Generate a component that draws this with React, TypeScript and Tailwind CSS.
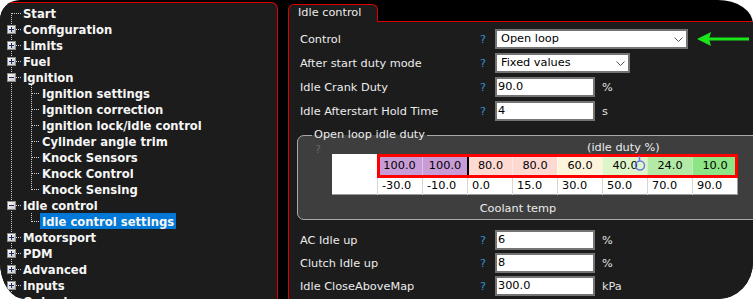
import React from 'react';

type TreeNode = {
  label: string;
  level: 0 | 1;
  box?: 'plus' | 'minus';
  first?: boolean;
  last?: boolean;
  selected?: boolean;
};

const tree: TreeNode[] = [
  { label: 'Start', level: 0, first: true },
  { label: 'Configuration', level: 0, box: 'plus' },
  { label: 'Limits', level: 0, box: 'plus' },
  { label: 'Fuel', level: 0, box: 'plus' },
  { label: 'Ignition', level: 0, box: 'minus' },
  { label: 'Ignition settings', level: 1 },
  { label: 'Ignition correction', level: 1 },
  { label: 'Ignition lock/idle control', level: 1 },
  { label: 'Cylinder angle trim', level: 1 },
  { label: 'Knock Sensors', level: 1 },
  { label: 'Knock Control', level: 1 },
  { label: 'Knock Sensing', level: 1, last: true },
  { label: 'Idle control', level: 0, box: 'minus' },
  { label: 'Idle control settings', level: 1, last: true, selected: true },
  { label: 'Motorsport', level: 0, box: 'plus' },
  { label: 'PDM', level: 0, box: 'plus' },
  { label: 'Advanced', level: 0, box: 'plus' },
  { label: 'Inputs', level: 0, box: 'plus' },
  { label: 'Outputs', level: 0, box: 'plus' },
];

const duty = [
  { v: '100.0', bg: 'bg-[#c89cd6]' },
  { v: '100.0', bg: 'bg-[#c89cd6]' },
  { v: '80.0', bg: 'bg-[#fdd9d2]' },
  { v: '80.0', bg: 'bg-[#fdd9d2]' },
  { v: '60.0', bg: 'bg-[#fef3db]' },
  { v: '40.0', bg: 'bg-[#def5c9]' },
  { v: '24.0', bg: 'bg-[#b2eaa6]' },
  { v: '10.0', bg: 'bg-[#8ee585]' },
];

const temps = ['-30.0', '-10.0', '0.0', '15.0', '30.0', '50.0', '70.0', '90.0'];

const dots = { stroke: '#cfcfcf', strokeWidth: 1, strokeDasharray: '1 1' };

// Lignes pointillées + boîte +/- d'une ligne de l'arbre
function TreeLines({ node }: { node: TreeNode }) {
  const w = node.level === 0 ? 21 : 40;
  return (
    <svg width={w} height={16} className="shrink-0">
      <line x1={11.5} y1={node.first ? 8 : 0} x2={11.5} y2={16} {...dots} />
      {node.level === 0 ? (
        <line x1={12} y1={8.5} x2={21} y2={8.5} {...dots} />
      ) : (
        <>
          <line x1={31.5} y1={0} x2={31.5} y2={node.last ? 9 : 16} {...dots} />
          <line x1={32} y1={8.5} x2={40} y2={8.5} {...dots} />
        </>
      )}
      {node.box && (
        <>
          <defs>
            <linearGradient id="boxfill" x1="0" y1="0" x2="1" y2="1">
              <stop offset="0" stopColor="#ffffff" />
              <stop offset="1" stopColor="#c4c4c4" />
            </linearGradient>
          </defs>
          <rect x={7.5} y={4.5} width={8} height={8} fill="url(#boxfill)" stroke="#8e8e8e" />
          <line x1={9} y1={8.5} x2={14} y2={8.5} stroke="#1c2e6e" />
          {node.box === 'plus' && <line x1={11.5} y1={6} x2={11.5} y2={11} stroke="#1c2e6e" />}
        </>
      )}
    </svg>
  );
}

function Chevron() {
  return (
    <svg width={9} height={5} className="shrink-0">
      <path d="M0.5 0.5 L4.5 4.5 L8.5 0.5" fill="none" stroke="#555" strokeWidth={1} />
    </svg>
  );
}

function Help({ dim }: { dim?: boolean }) {
  return <span className={dim ? 'text-[#666]' : 'text-[#2e92da]'}>?</span>;
}

function Row({ label, children }: { label: string; children: React.ReactNode }) {
  return (
    <div className="flex h-[20px] items-center">
      <div className="w-[180px] shrink-0 pt-[2px]">{label}</div>
      <div className="w-[15px] shrink-0 pt-[2px]">
        <Help />
      </div>
      {children}
    </div>
  );
}

function Input({ value, unit }: { value: string; unit: string }) {
  return (
    <>
      <div className="flex h-full w-[100px] items-center border-2 border-[#747474] bg-white pl-[1px] text-black">
        {value}
      </div>
      <span className="ml-[7px] pt-[2px] text-[#e0e0e0]">{unit}</span>
    </>
  );
}

function Select({ value, w }: { value: string; w: string }) {
  return (
    <div className={`flex h-full items-center justify-between border-2 border-[#747474] bg-white pl-[4px] pr-[3px] text-black ${w}`}>
      <span>{value}</span>
      <Chevron />
    </div>
  );
}

export default function App() {
  return (
    <div className="flex h-[299px] w-[753px] overflow-hidden rounded-tl-[20px] rounded-tr-[35px_24px] rounded-br-[35px_37px] rounded-bl-[25px_37px] bg-black font-['DejaVu_Sans',sans-serif]">
      {/* arbre de navigation */}
      <div className="mt-[2px] w-[278px] shrink-0 overflow-hidden rounded-tr-[7px] border-t border-r border-[#e00000] bg-[#1c1c1c]">
        <div className="-mt-px h-px w-[88px] bg-black" />
        <div className="pt-[2px] text-[11.6px] font-bold text-[#f6f6f6]">
          {tree.map(n => (
            <div key={n.label} className="flex h-[16px] items-center">
              <TreeLines node={n} />
              <span
                className={`block h-[16px] px-[2px] pt-[2px] leading-[14px] whitespace-nowrap ${
                  n.selected ? 'bg-[#0078d7]' : ''
                }`}
              >
                {n.label}
              </span>
            </div>
          ))}
        </div>
      </div>

      <div className="ml-[10px] flex min-w-0 flex-1 flex-col text-[11.3px] text-[#ececec]">
        <div className="flex h-[22px] pt-[4px]">
          <div className="flex w-[90px] items-center rounded-t-[6px] border border-b-0 border-[#e00000] bg-[#1c1c1c] pl-[9px]">
            Idle control
          </div>
          <div className="flex-1 border-b border-[#e00000]" />
        </div>

        <div className="flex-1 overflow-hidden border-l border-[#e00000] bg-[#1c1c1c] pt-[7px]">
          <div className="flex flex-col gap-[4px] pl-[11px]">
            <Row label="Control">
              <Select value="Open loop" w="w-[193px]" />
              <svg width={53} height={14} className="ml-[9px] shrink-0">
                <polygon points="0,7 14,0 12,7 14,14" fill="#19e619" />
                <rect x={12} y={5.5} width={40} height={3} fill="#19e619" />
              </svg>
            </Row>
            <Row label="After start duty mode">
              <Select value="Fixed values" w="w-[135px]" />
            </Row>
            <Row label="Idle Crank Duty">
              <Input value="90.0" unit="%" />
            </Row>
            <Row label="Idle Afterstart Hold Time">
              <Input value="4" unit="s" />
            </Row>
          </div>

          <fieldset className="mt-[7px] ml-[8px] w-[470px] rounded-[7px] border border-[#a8a8a8] bg-[#3e3e3e]">
            <legend className="ml-[14px] px-[2px] leading-[14px]">Open loop idle duty</legend>
            <div className="flex h-[12px] items-center leading-[12px]">
              <span className="ml-[17px] mt-[4px]">
                <Help dim />
              </span>
              <span className="ml-[266px]">(idle duty %)</span>
            </div>

            <div className="relative ml-[34px] w-[406px] bg-white text-black">
              <div className="grid h-[24px] grid-cols-[45px_repeat(8,45px)]">
                <div />
                {duty.map((d, i) => (
                  <div
                    key={i}
                    className={`flex items-center justify-center ${d.bg} ${
                      i === 2 ? 'border-l-2 border-black' : i > 0 ? 'border-l border-white/40' : ''
                    }`}
                  >
                    {d.v}
                  </div>
                ))}
              </div>
              <div className="grid h-[17px] grid-cols-[45px_repeat(8,45px)] border-r border-b border-[#9a9a9a]">
                <div />
                {temps.map(t => (
                  <div key={t} className="flex items-center border-l border-[#d6d6d6] pl-[4px]">
                    {t}
                  </div>
                ))}
              </div>
              {/* sélection et curseur */}
              <div className="pointer-events-none absolute top-0 left-[45px] h-[24px] w-[361px] border-[3px] border-[#ff0000]" />
              <svg width={14} height={20} className="absolute top-[2px] left-[301px]">
                <line x1={6.5} y1={0} x2={6.5} y2={5} stroke="#6b78e8" strokeWidth={1.5} />
                <circle cx={7} cy={9.5} r={4.5} fill="none" stroke="#6b78e8" strokeWidth={1.5} />
              </svg>
            </div>

            <div className="flex h-[24px] w-[440px] items-center justify-center pt-[3px] leading-none">Coolant temp</div>
          </fieldset>

          <div className="mt-[10px] flex flex-col gap-[3px] pl-[11px]">
            <Row label="AC Idle up">
              <Input value="6" unit="%" />
            </Row>
            <Row label="Clutch Idle up">
              <Input value="8" unit="%" />
            </Row>
            <Row label="Idle CloseAboveMap">
              <Input value="300.0" unit="kPa" />
            </Row>
          </div>
        </div>
      </div>
    </div>
  );
}
